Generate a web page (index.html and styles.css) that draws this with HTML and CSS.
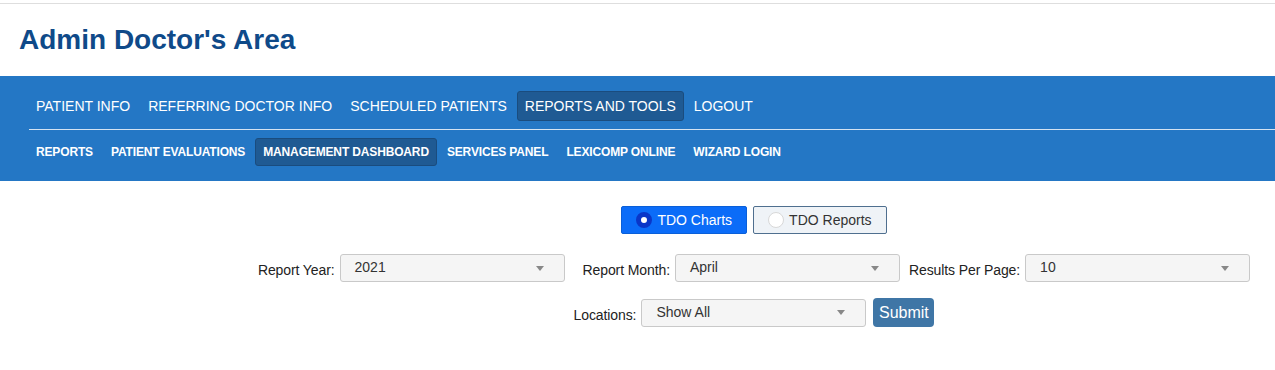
FILE: index.html
```html
<!DOCTYPE html>
<html lang="en">
  <head>
    <meta charset="utf-8">
    <title>Admin Doctor's Area</title>
    <link rel="stylesheet" href="styles.css">
  </head>
  <body>
    <header class="site-header">
      <h1>Admin Doctor's Area</h1>
    </header>

    <nav class="main-nav">
      <ul class="nav-row nav-row--top">
        <li><a href="#">PATIENT INFO</a></li>
        <li><a href="#">REFERRING DOCTOR INFO</a></li>
        <li><a href="#">SCHEDULED PATIENTS</a></li>
        <li><a href="#" class="active">REPORTS AND TOOLS</a></li>
        <li><a href="#">LOGOUT</a></li>
      </ul>
      <hr class="nav-divider" />
      <ul class="nav-row nav-row--sub">
        <li><a href="#">REPORTS</a></li>
        <li><a href="#">PATIENT EVALUATIONS</a></li>
        <li><a href="#" class="active">MANAGEMENT DASHBOARD</a></li>
        <li><a href="#">SERVICES PANEL</a></li>
        <li><a href="#">LEXICOMP ONLINE</a></li>
        <li><a href="#">WIZARD LOGIN</a></li>
      </ul>
    </nav>

    <main class="content">
      <div class="toggle-group">
        <label class="toggle toggle--on"><span class="radio"></span>TDO Charts</label>
        <label class="toggle"><span class="radio"></span>TDO Reports</label>
      </div>

      <div class="filter-row">
        <div class="field field--year">
          <span class="field-label">Report Year:</span>
          <div class="dropdown"><span>2021</span><b class="caret"></b></div>
        </div>
        <div class="field field--month">
          <span class="field-label">Report Month:</span>
          <div class="dropdown"><span>April</span><b class="caret"></b></div>
        </div>
        <div class="field">
          <span class="field-label">Results Per Page:</span>
          <div class="dropdown"><span>10</span><b class="caret"></b></div>
        </div>
      </div>

      <div class="filter-row filter-row--second">
        <div class="field">
          <span class="field-label">Locations:</span>
          <div class="dropdown"><span>Show All</span><b class="caret"></b></div>
        </div>
        <button class="btn-submit" type="button">Submit</button>
      </div>
    </main>
  </body>
</html>
```

FILE: styles.css
```css
body {
  margin: 0;
  font-family: "Liberation Sans", Arial, sans-serif;
  color: #333;
  background: #fff;
}

.site-header {
  margin-top: 3px;
  border-top: 1px solid #dedede;
  padding: 20px 19px;
}

.site-header h1 {
  margin: 0;
  font-size: 28px;
  line-height: 32px;
  font-weight: bold;
  color: #0f4a89;
}

/* blue navigation band */
.main-nav {
  background: #2477c5;
  padding: 15px 0 15px 28px;
}

.nav-row {
  list-style: none;
  margin: 0;
  padding: 0;
  display: flex;
  gap: 2px;
}

.nav-row a {
  display: block;
  color: #fff;
  text-decoration: none;
  padding: 6px 7px;
  border: 1px solid transparent;
  border-radius: 3px;
}

.nav-row--top a {
  font-size: 14px;
  line-height: 16px;
}

.nav-row--sub a {
  font-size: 12px;
  line-height: 14px;
  font-weight: bold;
  letter-spacing: -0.15px;
}

.nav-row a.active {
  background: #1f5a93;
  border-color: #1a4c7e;
}

.nav-divider {
  border: 0;
  border-top: 1px solid #d4e3f2;
  margin: 8px 0 8px 1px;
}

/* filters */
.content {
  margin-left: 233px;
  padding-top: 25px;
  display: flex;
  flex-direction: column;
  align-items: center;
}

.toggle-group {
  display: flex;
  gap: 6px;
}

.toggle {
  display: flex;
  align-items: center;
  height: 26px;
  padding: 0 14px;
  font-size: 14px;
  border: 1px solid #4f6f8f;
  border-radius: 2px;
  background: #eff3f7;
  color: #333;
}

.toggle--on {
  background: #0b6cf8;
  border-color: #0a5fd8;
  color: #fff;
}

.radio {
  box-sizing: border-box;
  width: 16px;
  height: 16px;
  border-radius: 50%;
  margin-right: 5px;
  background: #fff;
  border: 1px solid #d8d8d8;
}

.toggle--on .radio {
  border: 5px solid #0a36c8;
}

.filter-row {
  display: flex;
  align-items: center;
  margin-top: 20px;
}

.filter-row--second {
  margin-top: 16px;
}

.field {
  display: flex;
  align-items: center;
}

.field--year {
  margin-right: 18px;
}

.field--month {
  margin-right: 9px;
}

.field-label {
  font-size: 14px;
  letter-spacing: -0.1px;
  color: #222;
  margin-right: 5px;
  padding-top: 4px;
}

.dropdown {
  box-sizing: border-box;
  width: 225px;
  height: 28px;
  display: flex;
  align-items: center;
  justify-content: space-between;
  padding: 0 20px 0 14px;
  background: #f5f5f5;
  border: 1px solid #c9c9c9;
  border-radius: 3px;
  font-size: 14px;
  color: #333;
}

.dropdown span {
  margin-top: -2px;
}

.caret {
  width: 0;
  height: 0;
  border-left: 4px solid transparent;
  border-right: 4px solid transparent;
  border-top: 5px solid #888;
}

.btn-submit {
  margin-left: 7px;
  height: 29px;
  width: 61px;
  padding: 0;
  border: 0;
  border-radius: 4px;
  background: #3f76a6;
  color: #fff;
  font-family: "Liberation Sans", Arial, sans-serif;
  font-size: 16px;
}
```
